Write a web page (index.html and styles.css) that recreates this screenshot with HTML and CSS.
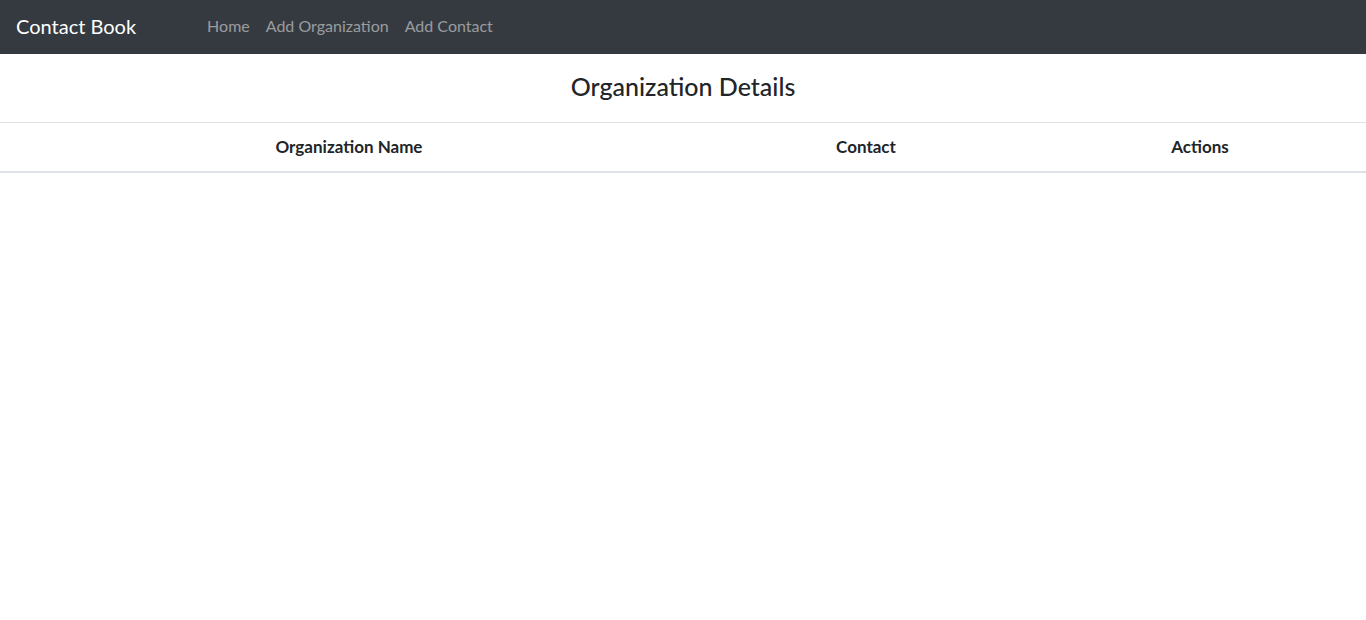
FILE: index.html
```html
<!DOCTYPE html>
<html>
<head>
<meta charset="utf-8">
<link rel="stylesheet" href="styles.css">
</head>
<body>
<nav class="navbar">
  <a class="brand" href="#">Contact Book</a>
  <ul class="nav-links">
    <li><a href="#">Home</a></li>
    <li><a href="#">Add Organization</a></li>
    <li><a href="#">Add Contact</a></li>
  </ul>
</nav>
<main>
  <h4 class="title">Organization Details</h4>
  <table class="table">
    <thead>
      <tr>
        <th class="col-name">Organization Name</th>
        <th class="col-contact">Contact</th>
        <th class="col-actions">Actions</th>
      </tr>
    </thead>
    <tbody></tbody>
  </table>
</main>
</body>
</html>
```
FILE: styles.css
```css
* { box-sizing: border-box; }
body {
  margin: 0;
  font-family: "Lato", "Noto Sans", sans-serif;
  font-size: 16px;
  line-height: 1.5;
  color: #212529;
  background: #fff;
}
.navbar {
  display: flex;
  align-items: center;
  height: 54px;
  padding: 0 16px 2px;
  background: #343a40;
}
.brand {
  font-size: 20px;
  color: #fff;
  text-decoration: none;
  margin-right: 63px;
}
.nav-links {
  display: flex;
  list-style: none;
  margin: 0;
  padding: 0;
}
.nav-links a {
  display: block;
  padding: 0 8px;
  color: rgba(255,255,255,0.5);
  text-decoration: none;
}
.title {
  margin: 0;
  height: 68px;
  padding-bottom: 4px;
  display: flex;
  align-items: center;
  justify-content: center;
  font-size: 25px;
  font-weight: 500;
  line-height: 1.2;
}
.table {
  width: 100%;
  border-collapse: collapse;
}
.table th {
  padding: 12px;
  text-align: center;
  font-size: 17px;
  line-height: 24px;
  font-weight: 700;
  border-top: 1px solid #dee2e6;
  border-bottom: 2px solid #dee2e6;
}
.col-name { width: 698px; }
.col-contact { width: 336px; }
```
